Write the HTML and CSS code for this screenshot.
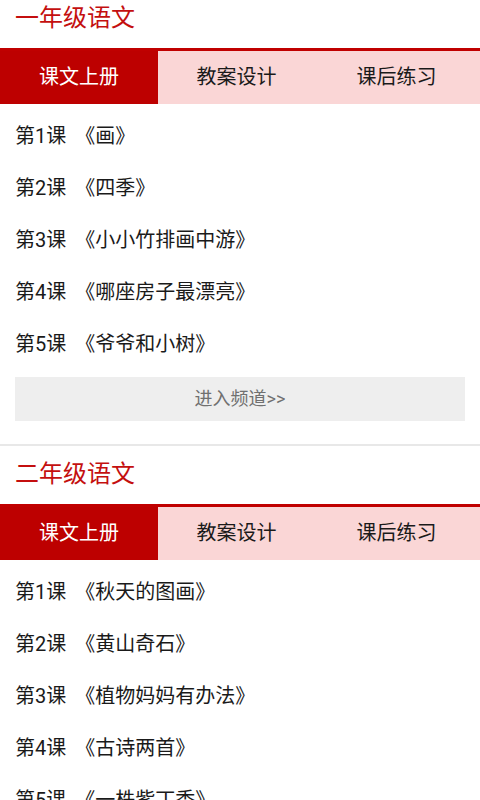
FILE: index.html
```html
<!DOCTYPE html>
<html lang="zh-CN">
<head>
    <meta charset="UTF-8">
    <meta name="viewport" content="width=device-width, initial-scale=1.0">
    <title>语文课文</title>
    <link rel="stylesheet" href="styles.css">
</head>
<body>

    <!-- 一年级 -->
    <div class="section">
        <h2 class="title">一年级语文</h2>
        <div class="tabs">
            <div class="tab active">课文上册</div>
            <div class="tab">教案设计</div>
            <div class="tab">课后练习</div>
        </div>
        <ul class="lessons">
            <li>第1课 《画》</li>
            <li>第2课 《四季》</li>
            <li>第3课 《小小竹排画中游》</li>
            <li>第4课 《哪座房子最漂亮》</li>
            <li>第5课 《爷爷和小树》</li>
        </ul>
        <div class="more">进入频道&gt;&gt;</div>
    </div>

    <!-- 二年级 -->
    <div class="section">
        <h2 class="title">二年级语文</h2>
        <div class="tabs">
            <div class="tab active">课文上册</div>
            <div class="tab">教案设计</div>
            <div class="tab">课后练习</div>
        </div>
        <ul class="lessons">
            <li>第1课 《秋天的图画》</li>
            <li>第2课 《黄山奇石》</li>
            <li>第3课 《植物妈妈有办法》</li>
            <li>第4课 《古诗两首》</li>
            <li>第5课 《一株紫丁香》</li>
        </ul>
        <div class="more">进入频道&gt;&gt;</div>
    </div>

</body>
</html>
```

FILE: styles.css
```css
body {
    margin: 0;
    padding: 0;
    background-color: #fff;
    color: #1a1a1a;
    font-family: Roboto, "Noto Sans CJK SC", sans-serif;
    text-spacing-trim: space-all;
}

.section {
    border-bottom: 2px solid #e8e8e8;
    padding-bottom: 23px;
}

.title {
    margin: 0;
    padding: 0 15px;
    height: 58px;
    line-height: 56px;
    font-size: 24px;
    font-weight: normal;
    color: #c40f0f;
}

.section:first-child .title {
    height: 48px;
    line-height: 36px;
}

.tabs {
    display: flex;
    border-top: 3px solid #c00000;
    background-color: #fad6d6;
}

.tab {
    flex: 1;
    height: 53px;
    line-height: 52px;
    padding-right: 7px;
    text-align: center;
    font-size: 20px;
    color: #1a1a1a;
}

.tab.active {
    flex: 0 0 158px;
    padding-right: 0;
    margin-right: 2px;
    background-color: #bd0000;
    color: #fff;
}

.lessons {
    list-style: none;
    margin: 0;
    padding: 6px 15px 0;
}

.lessons li {
    height: 52px;
    line-height: 52px;
    font-size: 20px;
    white-space: nowrap;
    word-spacing: 4px;
}

.more {
    margin: 7px 15px 0;
    height: 44px;
    line-height: 44px;
    background-color: #eeeeee;
    text-align: center;
    font-size: 18px;
    color: #707070;
}
```
